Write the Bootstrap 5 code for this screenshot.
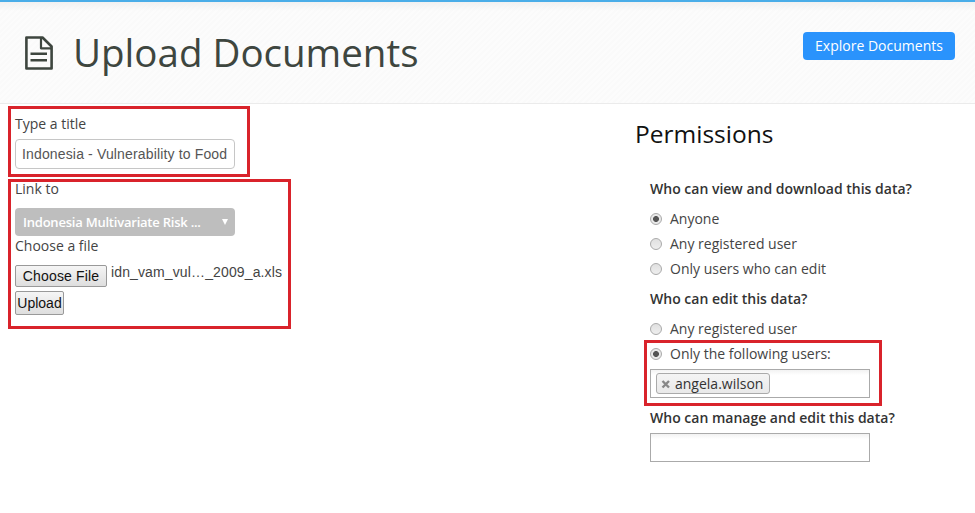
<!DOCTYPE html>
<html lang="en">
<head>
<meta charset="utf-8">
<meta name="viewport" content="width=device-width, initial-scale=1">
<title>Upload Documents</title>
<link href="https://cdn.jsdelivr.net/npm/bootstrap@5.3.0/dist/css/bootstrap.min.css" rel="stylesheet">
<style>
body{font:14px/20px "Open Sans",sans-serif;color:#444;background:#fff;overflow:hidden}
.page-head{height:104px;border-top:2px solid #4aade8;border-bottom:1px solid #ebebeb;padding:0 20px 0 24px;
 background:linear-gradient(#f1f1f1,rgba(250,250,250,0) 9px),repeating-linear-gradient(135deg,#fafafa 0 2px,#fcfcfc 2px 4px)}
.page-head svg{margin:34px 0 0 0;flex:none}
.page-head h1{font-size:38.5px;line-height:40px;font-weight:400;color:#3e463f;margin:30px 0 0 19px;white-space:nowrap}
.btn-explore{background:#2a93fc;color:#fff;border:0;border-radius:4px;width:152px;height:28px;padding:0;font-size:14px;line-height:28px;margin-top:30px}
.btn-explore:hover{background:#1c84ec;color:#fff}
.left-col{width:636px;padding:2px 0 0 8px}
.marked{border:3px solid #d9232b}
.mark-title{width:242px;height:71px;padding:5px 4px}
.mark-file{width:283px;height:150px;margin-top:2px;padding:0 4px}
.mark-users{width:238px;height:66px;margin:-1px 0 0 -6px;padding:1px 3px}
.title-input{width:220px;height:30px;min-height:0;margin-top:5px;padding:0 6px;border:1px solid #c6c6c6;border-radius:4px;font:14px/28px "Liberation Sans",Arial,sans-serif;letter-spacing:.15px;color:#555}
.link-label{line-height:14px}
.link-select{width:220px;height:28px;margin-top:12px;padding:0 7px 0 8px;border-radius:4px;background:#bebebe;color:#fff;font-size:13px;font-weight:600;letter-spacing:-.22px}
.arrow-down{border:3.5px solid transparent;border-top:6px solid #fff;border-bottom:0}
.file-row{margin-top:9px}
.sys-btn{font:14px/20px "Liberation Sans",Arial,sans-serif;color:#111;border:1px solid #999;border-radius:2px;background:linear-gradient(#f5f5f5,#dedede);padding:0;text-align:center;white-space:nowrap}
.choose{width:92px;height:22px;letter-spacing:.15px}
.upload{width:49px;height:24px;margin-top:4px}
.file-name{font:14px/16px "Liberation Sans",Arial,sans-serif;letter-spacing:.13px;color:#444;margin-left:4px;margin-top:-1px;white-space:nowrap}
.perms{width:330px}
.perms h3{font-size:24.5px;line-height:40px;font-weight:400;color:#111;margin:10px 0 0 -1px}
.perm-body{padding-left:14px}
.question{font-weight:600;color:#333;white-space:nowrap}
.choices{margin-top:7px}
.choice{height:25px;line-height:24px}
.dot{width:12px;height:12px;border:1px solid #aaa;border-radius:50%;background:linear-gradient(#e0e0e0,#eee);margin-right:8px;flex:none}
.dot.on{background:radial-gradient(circle,#555 0 2.6px,#e9e9e9 3.3px)}
.users-box{width:220px;height:29px;border:1px solid #aaa;background:linear-gradient(#f2f2f2,#fff 5px)}
.chosen-box{margin-top:5px}
.user-tag{height:21px;width:114px;margin:3px 0 0 5px;padding:0 0 0 4px;border:1px solid #aaa;border-radius:3px;background:linear-gradient(#f4f4f4,#e9e9e9);line-height:19px;color:#333}
.q-view{margin-top:25px}
.q-edit{margin-top:8px}
.q-manage{margin-top:2px}
.manage-box{margin-top:5px}
</style>
</head>
<body>
<header class="page-head d-flex align-items-start">
 <svg width="30" height="34" viewBox="0 0 30 34" fill="none" stroke="#3e463f" stroke-width="2.6" stroke-linejoin="round"><path d="M2.4 1.5H18.5L27.6 10.5V32.5H2.4Z"/><path d="M17 2V12.3H27.5" stroke-width="2.2"/><path d="M6.5 17.8H23M6.5 24.2H23" stroke-width="2.4"/></svg>
 <h1>Upload Documents</h1>
 <a class="btn btn-explore ms-auto" href="#">Explore Documents</a>
</header>
<main class="d-flex align-items-start">
 <section class="left-col">
  <div class="marked mark-title">
   <label class="d-block" for="doc-title">Type a title</label>
   <input id="doc-title" class="form-control title-input" value="Indonesia - Vulnerability to Food">
  </div>
  <div class="marked mark-file">
   <div class="link-label">Link to</div>
   <div class="link-select d-flex align-items-center justify-content-between"><span>Indonesia Multivariate Risk ...</span><span class="arrow-down"></span></div>
   <div>Choose a file</div>
   <div class="d-flex align-items-start file-row"><button class="sys-btn choose">Choose File</button><span class="file-name">idn_vam_vul…_2009_a.xls</span></div>
   <button class="sys-btn upload d-block">Upload</button>
  </div>
 </section>
 <section class="perms">
  <h3>Permissions</h3>
  <div class="perm-body">
   <div class="question q-view">Who can view and download this data?</div>
   <div class="choices">
    <div class="choice d-flex align-items-center"><span class="dot on"></span>Anyone</div>
    <div class="choice d-flex align-items-center"><span class="dot"></span>Any registered user</div>
    <div class="choice d-flex align-items-center"><span class="dot"></span>Only users who can edit</div>
   </div>
   <div class="question q-edit">Who can edit this data?</div>
   <div class="choices">
    <div class="choice d-flex align-items-center"><span class="dot"></span>Any registered user</div>
   </div>
   <div class="marked mark-users">
    <div class="d-flex align-items-center"><span class="dot on"></span>Only the following users:</div>
    <div class="users-box chosen-box"><div class="user-tag d-flex align-items-center"><svg class="me-1" width="10" height="10" viewBox="0 0 10 10" stroke="#888" stroke-width="2.4"><path d="M1.5 2L8 8.5M8 2L1.5 8.5"/></svg>angela.wilson</div></div>
   </div>
   <div class="question q-manage">Who can manage and edit this data?</div>
   <div class="users-box manage-box"></div>
  </div>
 </section>
</main>
<script src="https://cdn.jsdelivr.net/npm/bootstrap@5.3.0/dist/js/bootstrap.bundle.min.js"></script>
</body>
</html>
